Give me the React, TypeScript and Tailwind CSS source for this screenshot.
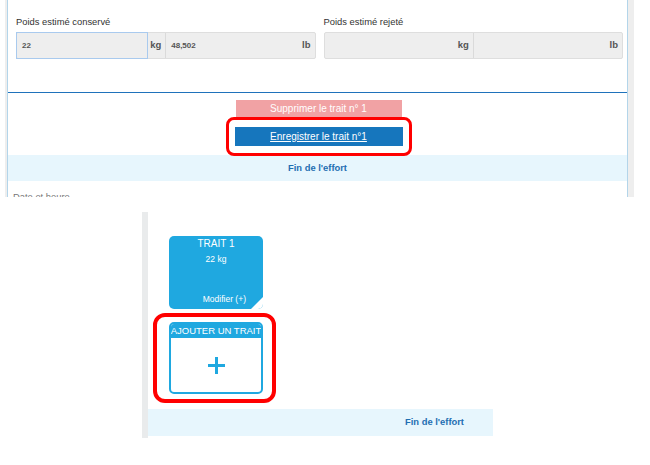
import React from "react";

function UnitHalf({ value, unit, focused, divider }: { value?: string; unit: string; focused?: boolean; divider?: boolean }) {
  return (
    <div className={`flex-1 flex items-stretch ${divider ? "border-l border-[#dadada]" : ""}`}>
      <div className={`flex-1 flex items-center pl-[5px] ${focused ? "border border-[#a9caee] -m-px mr-0" : ""}`}>
        <span className="text-[8px] font-bold text-[#555]">{value}</span>
      </div>
      <span className="flex items-center pl-[2px] pr-[4px] text-[9.5px] font-bold text-[#555]">{unit}</span>
    </div>
  );
}

function WeightField({ label, kg, lb, focused }: { label: string; kg?: string; lb?: string; focused?: boolean }) {
  return (
    <div className="flex-1 flex flex-col">
      <div className="text-[9.4px] leading-[12px] text-[#333]">{label}</div>
      <div className="mt-[4px] h-[27px] flex bg-[#eeeeee] border border-[#dedede] rounded-[2px]">
        <UnitHalf value={kg} unit="kg" focused={focused} />
        <UnitHalf value={lb} unit="lb" divider />
      </div>
    </div>
  );
}

export default function App() {
  return (
    <div className="w-[650px] h-[465px] bg-white overflow-hidden font-['Liberation_Sans',Arial,sans-serif]">
      {/* Top screenshot */}
      <div className="h-[197px] overflow-hidden flex pl-[5px]">
        <div className="w-[2px] bg-[#eeeeee]" />
        <div className="w-[621px] min-h-full self-start border-x border-[#b3d5ea] flex flex-col">
          <div className="shrink-0 flex gap-[8px] pl-[8px] pr-[4px] pt-[16px]">
            <WeightField label="Poids estimé conservé" kg="22" lb="48,502" focused />
            <WeightField label="Poids estimé rejeté" />
          </div>
          <div className="shrink-0 mt-[33px] border-t border-[#1f72bb]" />
          <div className="shrink-0 flex flex-col items-center pl-[2px]">
            <div className="mt-[7px] w-[166px] h-[17px] bg-[#f1a2a4] text-white text-[10px] flex items-center justify-center">
              Supprimer le trait n° 1
            </div>
            <div className="relative mt-[10px]">
              <div className="w-[168px] h-[19px] bg-[#1676bd] text-white text-[10px] underline flex items-center justify-center">
                Enregistrer le trait n°1
              </div>
              <div className="absolute -left-[9px] -right-[9px] -top-[10px] -bottom-[10px] border-[3.5px] border-[#ff0000] rounded-[8px] z-10" />
            </div>
          </div>
          <div className="shrink-0 mt-[9px] h-[26px] bg-[#e7f6fd] flex items-center justify-center text-[9.4px] font-bold text-[#1f6fb2]">
            Fin de l'effort
          </div>
          <div className="shrink-0 mt-[10px] pl-[5px] text-[9.4px] leading-[12px] text-[#777]">Date et heure</div>
        </div>
        <div className="w-[6px] bg-[#eeeeee]" />
      </div>

      {/* Bottom screenshot */}
      <div className="mt-[15px] ml-[142px] flex">
        <div className="w-[6px] h-[226px] bg-[#e9ebec]" />
        <div className="w-[345px] flex flex-col">
          <div className="pl-[21px] pt-[24px] flex flex-col">
            <div className="relative w-[94px] h-[73px] rounded-[5px] bg-[#1fa8e0] text-white flex flex-col items-center overflow-hidden">
              <div className="mt-[2px] text-[10px] leading-[12px]">TRAIT 1</div>
              <div className="mt-[4px] text-[8.5px] leading-[11px]">22 kg</div>
              <div className="flex-1" />
              <div className="self-end pr-[17px] pb-[4px] text-[8.5px] leading-[11px]">Modifier (+)</div>
              <svg className="absolute right-0 bottom-0" width="12" height="12" viewBox="0 0 12 12">
                <polygon points="12,0 12,12 0,12" fill="#ffffff" />
              </svg>
            </div>
            <div className="relative mt-[13px] w-[94px]">
              <div className="h-[72px] border-2 border-[#1fa8e0] rounded-[5px] overflow-hidden flex flex-col bg-white">
                <div className="h-[14px] bg-[#1fa8e0] text-white text-[9.5px] leading-[14px] text-center whitespace-nowrap -mx-[2px]">
                  AJOUTER UN TRAIT
                </div>
                <div className="flex-1 flex items-center justify-center">
                  <svg width="19" height="19" viewBox="0 0 19 19">
                    <line x1="9.5" y1="1" x2="9.5" y2="18" stroke="#1fa8e0" strokeWidth="3" />
                    <line x1="1" y1="9.5" x2="18" y2="9.5" stroke="#1fa8e0" strokeWidth="3" />
                  </svg>
                </div>
              </div>
              <div className="absolute -left-[16px] -right-[13px] -top-[9px] -bottom-[9px] border-[4px] border-[#ff0000] rounded-[12px]" />
            </div>
          </div>
          <div className="mt-[15px] h-[27px] bg-[#e7f6fd] flex items-center pl-[257px] text-[9.4px] font-bold text-[#1f6fb2]">
            Fin de l'effort
          </div>
        </div>
      </div>
    </div>
  );
}
